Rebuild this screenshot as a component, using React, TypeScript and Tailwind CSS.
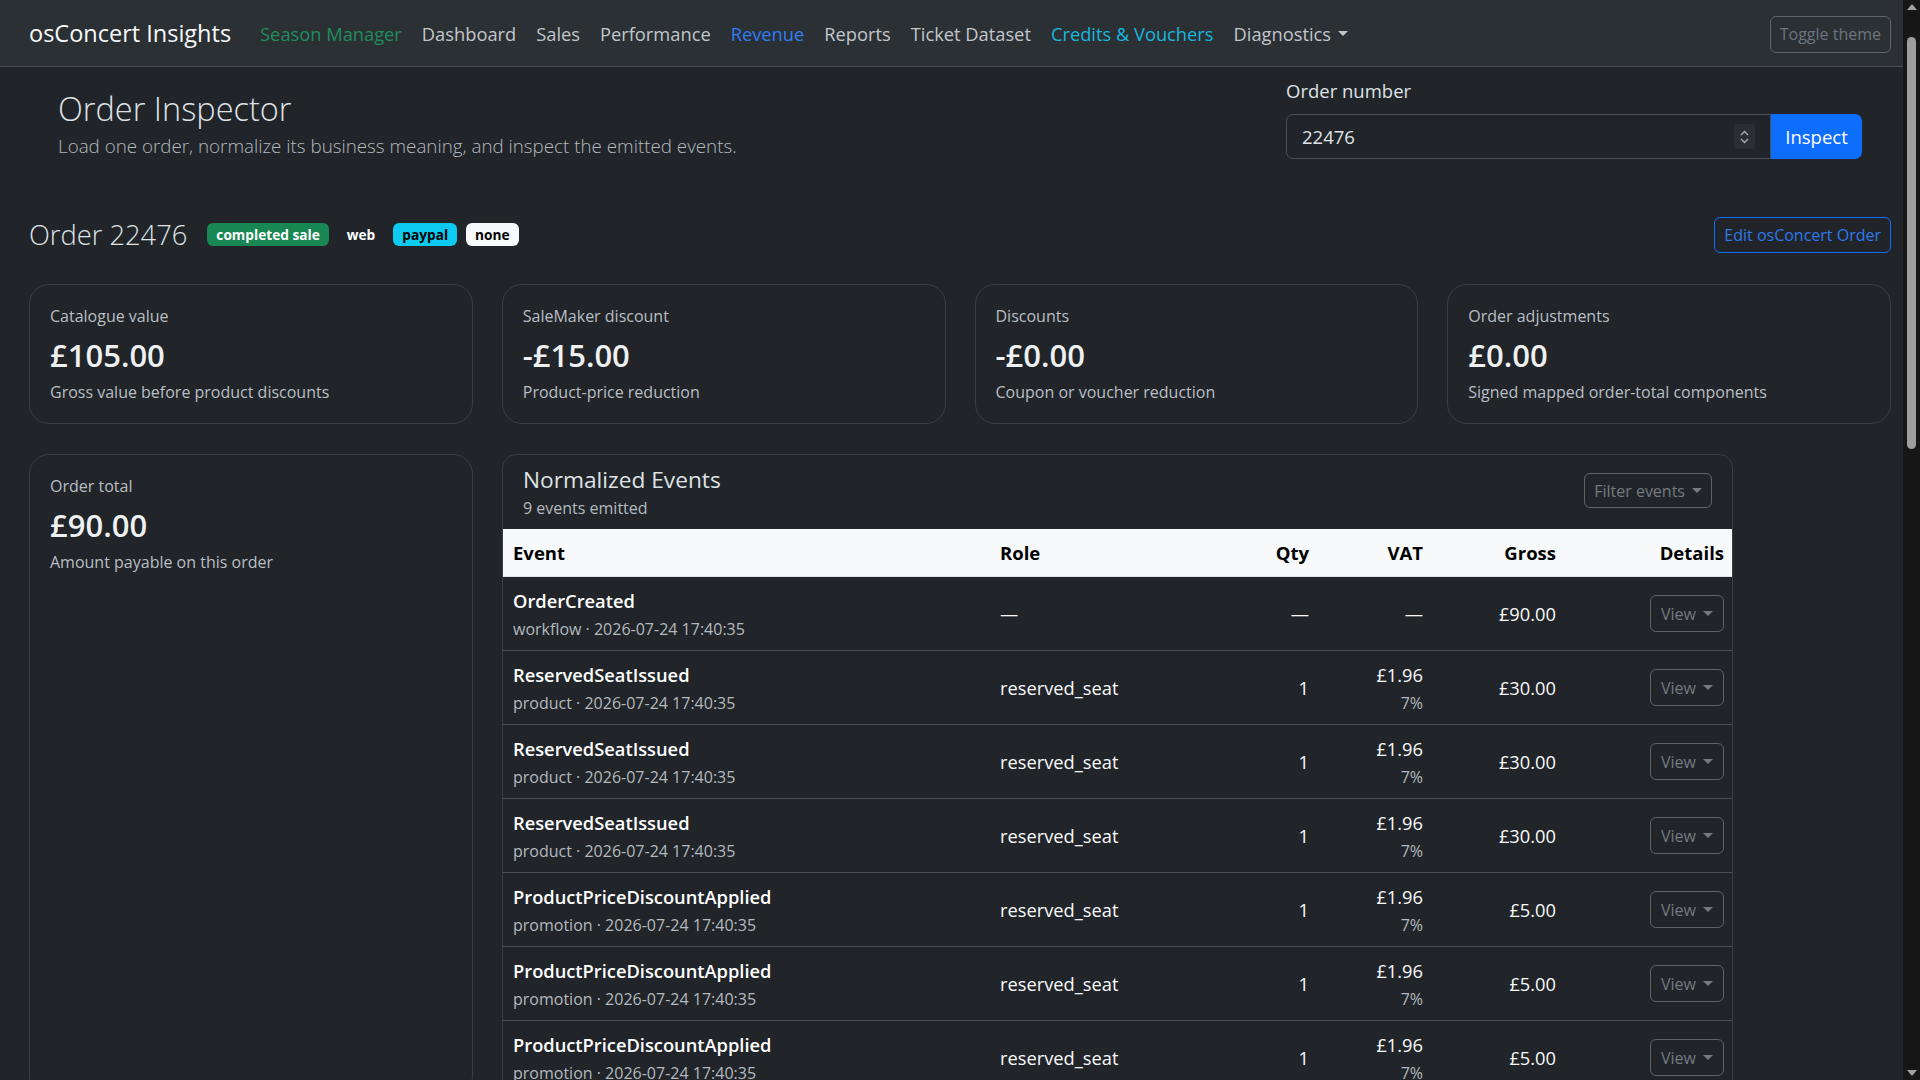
import React from 'react';

type EventRow = {
    name: string;
    source: string;
    role: string;
    qty: string;
    vat?: { amount: string; rate: string };
    gross: string;
};

const stamp = '2026-07-24 17:40:35';
const seatVat = { amount: '£1.96', rate: '7%' };

const events: EventRow[] = [
    { name: 'OrderCreated', source: 'workflow', role: '—', qty: '—', gross: '£90.00' },
    { name: 'ReservedSeatIssued', source: 'product', role: 'reserved_seat', qty: '1', vat: seatVat, gross: '£30.00' },
    { name: 'ReservedSeatIssued', source: 'product', role: 'reserved_seat', qty: '1', vat: seatVat, gross: '£30.00' },
    { name: 'ReservedSeatIssued', source: 'product', role: 'reserved_seat', qty: '1', vat: seatVat, gross: '£30.00' },
    { name: 'ProductPriceDiscountApplied', source: 'promotion', role: 'reserved_seat', qty: '1', vat: seatVat, gross: '£5.00' },
    { name: 'ProductPriceDiscountApplied', source: 'promotion', role: 'reserved_seat', qty: '1', vat: seatVat, gross: '£5.00' },
    { name: 'ProductPriceDiscountApplied', source: 'promotion', role: 'reserved_seat', qty: '1', vat: seatVat, gross: '£5.00' },
];

const navLinks = [
    { label: 'Season Manager', cls: 'text-[#1f8d5b]' },
    { label: 'Dashboard', cls: 'text-[#c2c6ca]' },
    { label: 'Sales', cls: 'text-[#c2c6ca]' },
    { label: 'Performance', cls: 'text-[#c2c6ca]' },
    { label: 'Revenue', cls: 'text-[#2f7cf4]' },
    { label: 'Reports', cls: 'text-[#c2c6ca]' },
    { label: 'Ticket Dataset', cls: 'text-[#c2c6ca]' },
    { label: 'Credits & Vouchers', cls: 'text-[#19b6dc]' },
];

const cols = 'grid grid-cols-[487px_230px_99px_114px_133px_168px]';

const Caret = () => (
    <span className="ml-[7px] inline-block h-0 w-0 border-x-[5px] border-t-[5px] border-x-transparent border-t-current" />
);

const StatCard = ({ label, value, note, className = '' }: { label: string; value: string; note: string; className?: string }) => (
    <div className={`rounded-[20px] border border-[#3a3f44] px-[20px] pt-[18px] pb-[18px] ${className}`}>
        <p className="text-[16px] leading-[26px] text-[#b9bec4]">{label}</p>
        <p className="mt-[5px] text-[31px] font-semibold leading-[43px] text-[#eef0f2]">{value}</p>
        <p className="mt-[2px] text-[16px] leading-[26px] text-[#b9bec4]">{note}</p>
    </div>
);

export default function App() {
    return (
        <div
            className="flex h-[1080px] overflow-hidden bg-[#212529] text-[#dee2e6]"
            style={{ fontFamily: '"Segoe UI", "Open Sans", "Noto Sans", sans-serif' }}
        >
            <div className="flex w-[1903px] flex-col overflow-hidden">
                {/* Navbar */}
                <nav className="flex h-[67px] shrink-0 items-center border-b border-[#4b5055] bg-[#2b3035] pl-[29px] pr-[12px] pt-[2px]">
                    <span className="mr-[19px] text-[23.5px] leading-none text-[#f8f9fa]">osConcert Insights</span>
                    {navLinks.map(link => (
                        <span key={link.label} className={`px-[10px] text-[18.3px] leading-none ${link.cls}`}>
                            {link.label}
                        </span>
                    ))}
                    <span className="flex items-center px-[10px] text-[18.3px] leading-none text-[#c2c6ca]">
                        Diagnostics
                        <Caret />
                    </span>
                    <button className="ml-auto h-[37px] rounded-[6px] border border-[#5c636a] px-[9px] text-[16px] text-[#6c757d]">
                        Toggle theme
                    </button>
                </nav>

                <main className="pl-[29px] pr-[12px]">
                    {/* Page header */}
                    <header className="flex items-start justify-between px-[29px] pt-[9px]">
                        <div className="pt-[11px]">
                            <h1 className="text-[32.5px] font-light leading-[44px] text-[#dee2e6]">Order Inspector</h1>
                            <p className="text-[18.8px] font-light leading-[30px] text-[#b3b9bf]">
                                Load one order, normalize its business meaning, and inspect the emitted events.
                            </p>
                        </div>
                        <div className="w-[576px]">
                            <label className="mb-[8px] block text-[18.5px] leading-[30px] text-[#dee2e6]">Order number</label>
                            <div className="flex h-[45px]">
                                <div className="flex flex-1 items-center rounded-l-[7px] border border-[#495057] bg-[#212529] pl-[15px] pr-[15px]">
                                    <span className="text-[18.5px] text-[#dee2e6]">22476</span>
                                    <span className="ml-auto flex h-[25px] w-[21px] flex-col items-center justify-center rounded-[2px] bg-[#2c2e33] text-[#a9aeb3]">
                                        <svg width="9" height="6" viewBox="0 0 9 6" fill="none" stroke="currentColor" strokeWidth="1.3">
                                            <path d="M1 5l3.5-3.5L8 5" />
                                        </svg>
                                        <svg width="9" height="6" viewBox="0 0 9 6" fill="none" stroke="currentColor" strokeWidth="1.3" className="mt-[2px]">
                                            <path d="M1 1l3.5 3.5L8 1" />
                                        </svg>
                                    </span>
                                </div>
                                <button className="w-[91px] rounded-r-[7px] bg-[#0d6efd] text-[18.5px] text-white">Inspect</button>
                            </div>
                        </div>
                    </header>

                    {/* Order title row */}
                    <div className="mt-[56px] flex h-[36px] items-center justify-between">
                        <div className="flex items-center">
                            <h2 className="text-[27.3px] font-light leading-none text-[#dee2e6]">Order 22476</h2>
                            <div className="ml-[20px] flex items-center gap-[9px]">
                                <span className="inline-flex h-[23px] items-center rounded-[6px] bg-[#198754] px-[9px] text-[13.7px] font-bold text-white">completed sale</span>
                                <span className="inline-flex h-[23px] items-center rounded-[6px] bg-[#212529] px-[9px] text-[13.7px] font-bold text-white">web</span>
                                <span className="inline-flex h-[23px] items-center rounded-[6px] bg-[#0dcaf0] px-[9px] text-[13.7px] font-bold text-black">paypal</span>
                                <span className="inline-flex h-[23px] items-center rounded-[6px] bg-[#f8f9fa] px-[9px] text-[13.7px] font-bold text-black">none</span>
                            </div>
                        </div>
                        <button className="h-[36px] rounded-[6px] border border-[#0d6efd] px-[9px] text-[16px] text-[#2f78ea]">
                            Edit osConcert Order
                        </button>
                    </div>

                    {/* Summary cards */}
                    <div className="mt-[31px] grid grid-cols-4 gap-[29px]">
                        <StatCard label="Catalogue value" value="£105.00" note="Gross value before product discounts" />
                        <StatCard label="SaleMaker discount" value="-£15.00" note="Product-price reduction" />
                        <StatCard label="Discounts" value="-£0.00" note="Coupon or voucher reduction" />
                        <StatCard label="Order adjustments" value="£0.00" note="Signed mapped order-total components" />
                    </div>

                    {/* Total + events */}
                    <div className="mt-[30px] flex items-stretch gap-[29px]">
                        <StatCard className="w-[444px] shrink-0" label="Order total" value="£90.00" note="Amount payable on this order" />

                        <section className="w-[1231px] shrink-0 overflow-hidden rounded-[14px] border border-[#3a3f44]">
                            <div className="flex items-start justify-between px-[20px] pt-[10px] pb-[8px]">
                                <div>
                                    <h3 className="text-[22.7px] leading-[30px] text-[#dee2e6]">Normalized Events</h3>
                                    <p className="text-[16px] leading-[26px] text-[#b3b9bf]">9 events emitted</p>
                                </div>
                                <button className="mt-[8px] flex h-[35px] items-center rounded-[6px] border border-[#5c636a] px-[9px] text-[16px] text-[#737a81]">
                                    Filter events
                                    <Caret />
                                </button>
                            </div>

                            <div className={`${cols} h-[48px] items-center border-b border-[#dee2e6] bg-[#f8f9fa] text-[18.5px] font-bold text-black`}>
                                <div className="px-[10px]">Event</div>
                                <div className="px-[10px]">Role</div>
                                <div className="px-[10px] text-right">Qty</div>
                                <div className="px-[10px] text-right">VAT</div>
                                <div className="px-[10px] text-right">Gross</div>
                                <div className="px-[10px] text-right">Details</div>
                            </div>

                            {events.map((ev, idx) => (
                                <div key={idx} className={`${cols} h-[74px] items-center border-b border-[#4a4f55] text-[18.3px] text-[#f8f9fa]`}>
                                    <div className="px-[10px]">
                                        <p className="font-semibold leading-[30px] text-white">{ev.name}</p>
                                        <p className="text-[16px] leading-[26px] text-[#b3b9bf]">
                                            {ev.source} · {stamp}
                                        </p>
                                    </div>
                                    <div className="px-[10px]">{ev.role}</div>
                                    <div className="px-[10px] text-right">{ev.qty}</div>
                                    <div className="px-[10px] text-right">
                                        {ev.vat ? (
                                            <>
                                                <p className="leading-[30px]">{ev.vat.amount}</p>
                                                <p className="text-[16px] leading-[26px] text-[#b3b9bf]">{ev.vat.rate}</p>
                                            </>
                                        ) : (
                                            '—'
                                        )}
                                    </div>
                                    <div className="px-[10px] text-right">{ev.gross}</div>
                                    <div className="flex justify-end px-[10px]">
                                        <button className="flex h-[37px] items-center rounded-[6px] border border-[#5c636a] px-[10px] text-[16px] text-[#737a81]">
                                            View
                                            <Caret />
                                        </button>
                                    </div>
                                </div>
                            ))}
                        </section>
                    </div>
                </main>
            </div>

            {/* Scrollbar */}
            <div className="flex w-[17px] shrink-0 flex-col items-center bg-[#171717]">
                <div className="mt-[4px] h-0 w-0 border-x-[5px] border-b-[6px] border-x-transparent border-b-[#a3a3a3]" />
                <div className="mt-[27px] h-[412px] w-[9px] rounded-full bg-[#9e9e9e]" />
                <div className="mt-auto mb-[4px] h-0 w-0 border-x-[5px] border-t-[6px] border-x-transparent border-t-[#a3a3a3]" />
            </div>
        </div>
    );
}
